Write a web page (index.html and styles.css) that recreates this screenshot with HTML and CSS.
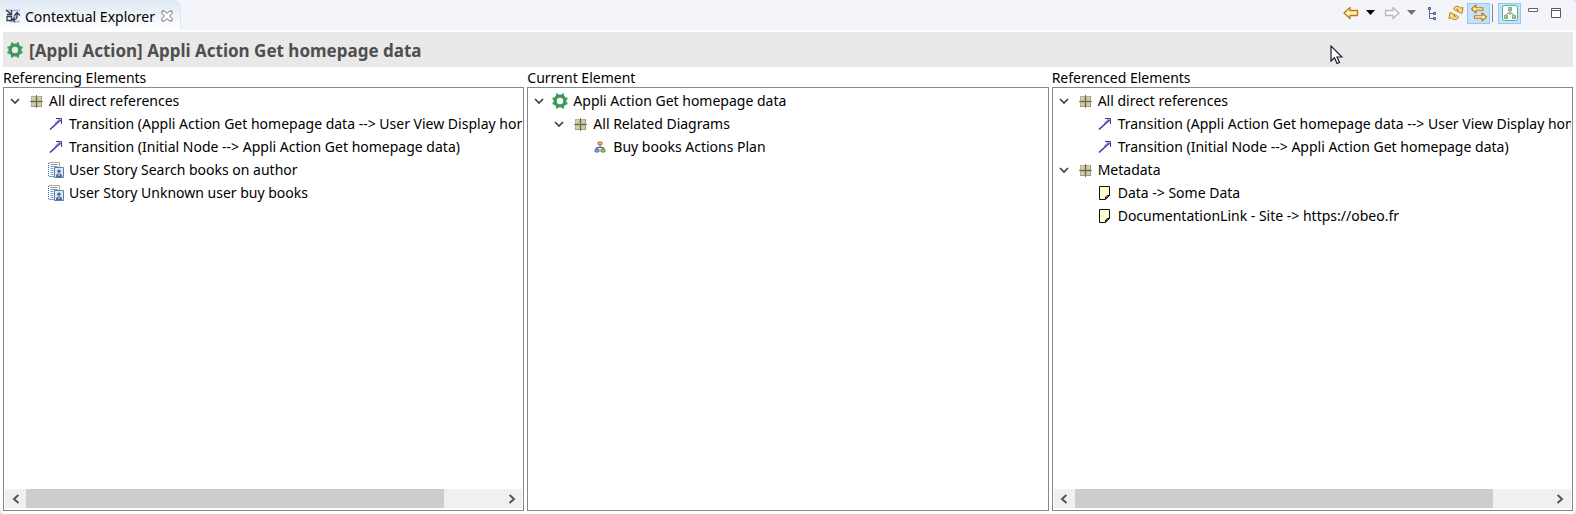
FILE: index.html
```html
<!DOCTYPE html>
<html lang="en">
<head>
<meta charset="utf-8">
<title>Contextual Explorer</title>
<link rel="stylesheet" href="styles.css">
</head>
<body>
<svg class="defs" aria-hidden="true">
  <symbol id="chevron" viewBox="0 0 10 6"><path d="M1 1l4 4 4-4" fill="none" stroke="#404040" stroke-width="1.7"/></symbol>
  <symbol id="gear" viewBox="0 0 16 16">
    <circle cx="8" cy="8" r="4.900" fill="none" stroke="#3c9a58" stroke-width="3.400"/>
    <path d="M4 .5h2l1 2.500H4zM10 .5h2V3H9zM4 15.500h2L7 13H4zM10 15.500h2V13H9zM.5 4.500v2L3 7V4.500zM.5 9.500v2H3V9zM15.500 4.500v2L13 7V4.500zM15.500 9.500v2H13V9z" fill="#3c9a58"/>
  </symbol>
  <symbol id="package" viewBox="0 0 16 16">
    <path d="M3 3h11v11H3z" fill="#b5b394"/>
    <path d="M4 4h3v3H4zM10 4h3v3h-3zM4 10h3v3H4zM10 10h3v3h-3z" fill="#d0ceb2"/>
    <path d="M8.500 2v13M2 8.500h13" stroke="#6d6a45"/>
    <path d="M3 13.500h11M13.500 3v11" stroke="#8f8c6c" stroke-opacity=".6"/>
  </symbol>
  <symbol id="arrow" viewBox="0 0 16 16">
    <path d="M8 2.500h5.500V8" fill="none" stroke="#3a3a9e"/>
    <path d="M9.500 3.500h3v3z" fill="#8d8de0"/>
    <path d="M2 13.500L12.500 4" stroke="#3030a0" stroke-width="1.400"/>
    <path d="M7 7.500L11.500 3.500" stroke="#8d8de0" stroke-width="1.300"/>
  </symbol>
  <symbol id="story" viewBox="0 0 16 16">
    <path d="M1 .5h10.500V5" fill="none" stroke="#c0a860"/>
    <path d="M.5 1v13" stroke="#3d6497" stroke-dasharray="1 1"/>
    <path d="M2.500 2.500h7M2.500 4.500h7M2.500 6.500h3M2.500 8.500h3M2.500 10.500h3M2.500 12.500h3M1 14.500h5" stroke="#6f9bce"/>
    <path d="M6.500 5.500h9v10h-9z" fill="#dbe8f8" stroke="#667f9f"/>
    <path d="M8 15c0-3 1.500-3.500 3-3.500s3 .5 3 3.500z" fill="#3d6497"/><circle cx="11" cy="9.200" r="1.600" fill="#3d6497"/><path d="M10 12.500l1 2 1-2" fill="#fff"/>
  </symbol>
  <symbol id="plan" viewBox="0 0 16 16">
    <path d="M8 6v3M4.500 11V8.500h7V11" fill="none" stroke="#50607a"/>
    <rect x="6" y="3" width="4" height="3" rx="1" fill="#f0c552" stroke="#98711d"/>
    <rect x="3" y="10" width="4" height="3" rx="1" fill="#90b4e8" stroke="#355c9c"/>
    <rect x="9" y="10" width="4" height="3" rx="1" fill="#bed85a" stroke="#44722a"/>
  </symbol>
  <symbol id="note" viewBox="0 0 16 16">
    <path d="M2.500 1.500h10v9l-4 4h-6z" fill="#ffffd2" stroke="#111"/>
    <path d="M8.500 14v-2l1.500.500v-2h2.500z" fill="#fff" stroke="#111"/>
  </symbol>
  <symbol id="left-arrow" viewBox="0 0 16 14"><path d="M1 7l6-5.500v3h7.500v5H7v3z" stroke-linejoin="round"/></symbol>
  <symbol id="down" viewBox="0 0 10 6"><path d="M0 0h9L4.500 5z"/></symbol>
  <symbol id="scroll-left" viewBox="0 0 10 10"><path d="M7.500 1L3 5l4.500 4" fill="none" stroke="#555" stroke-width="2"/></symbol>
</svg>

<main class="view">
  <header class="tabbar">
    <div class="tab">
      <svg class="icon" viewBox="0 0 16 16" aria-hidden="true">
        <path d="M1 2.500h14M5 13.500h10M8 8h4" stroke="#a9c5ef" stroke-width="2"/>
        <path d="M1 2l5 4M6.500 2v4.500H2M2 12.500V8.500h4.500v4zM8 11.500c4 .5 4.500-2 4-6M9.500 7.500l2.500-3 3 3M10 9l-2.500 2.500L10 14" fill="none" stroke="#333d4c" stroke-width="1.300"/>
      </svg>
      <span>Contextual Explorer</span>
      <button class="close" aria-label="Close">
        <svg width="12" height="12" viewBox="0 0 12 12"><path d="M1 1h2.500L6 3.500 8.500 1H11v2.500L8.500 6 11 8.500V11H8.500L6 8.500 3.500 11H1V8.500L3.500 6 1 3.500z" fill="#fff" stroke="#6b6e75"/></svg>
      </button>
    </div>
    <div class="toolbar" role="toolbar" aria-label="View actions">
      <button class="tool" aria-label="Back"><svg width="16" height="14" fill="#fff0b8" stroke="#b87c11" stroke-width="1.300"><use href="#left-arrow"/></svg></button>
      <button class="tool narrow" aria-label="Back history"><svg width="10" height="6"><use href="#down"/></svg></button>
      <button class="tool" aria-label="Forward"><svg class="flip" width="16" height="14" fill="#fafafa" stroke="#b5b8ba" stroke-width="1.300"><use href="#left-arrow"/></svg></button>
      <button class="tool narrow" aria-label="Forward history"><svg width="10" height="6" fill="#6f7276"><use href="#down"/></svg></button>
      <button class="tool" aria-label="Show tree">
        <svg width="16" height="16" viewBox="0 0 16 16"><path d="M4.500 4v9.500H8M4.500 8.500H8" fill="none" stroke="#666e84"/><path d="M3.500 2.500h2v2h-2zM8.500 7.500h2v2h-2zM8.500 12.500h2v2h-2z" fill="#8bafe4" stroke="#3c5f9d"/></svg>
      </button>
      <button class="tool" aria-label="Refresh">
        <svg width="16" height="16" viewBox="0 0 16 16" fill="#ffe184" stroke="#b87c11" stroke-linejoin="round"><path d="M5.500 4C7 .8 10.500.5 12.500 3L15 2.500 14 8.500 8.500 6l2-1C9.500 3.500 8 4 7.500 5.500zM10.500 12C9 15.200 5.500 15.500 3.500 13L1 13.500 2 7.500 7.500 10l-2 1c1 1.500 2.500 1 3-.5z"/></svg>
      </button>
      <button class="tool on" aria-label="Link with editor" aria-pressed="true">
        <svg width="18" height="18" viewBox="0 0 18 18" fill="#fff0b8" stroke="#b87c11" stroke-width="1.100" stroke-linejoin="round"><path d="M1.500 5l4.500-4v2.700h7v2.600H6V9zM16.500 13L12 9v2.700H4.500v2.600H12V17z"/></svg>
      </button>
      <span class="divider"></span>
      <button class="tool on" aria-label="Show diagrams" aria-pressed="true">
        <svg width="16" height="16" viewBox="0 0 16 16"><rect x=".5" y=".5" width="15" height="15" rx="2" fill="#fff" stroke="#62ab7c"/><path d="M8 6v4M4 10l2-2h4l2 2" fill="none" stroke="#888"/><path d="M6 2h4v4H6zM2 10h4v4H2zM10 10h4v4h-4z" fill="#76b98a"/><path d="M7 3h1v1H7zM3 11h1v1H3zM11 11h1v1h-1z" fill="#d3ecd9"/></svg>
      </button>
      <button class="tool" aria-label="Minimize"><svg width="10" height="12" viewBox="0 0 10 12"><path d="M.5 1.500h9v3h-9z" fill="#fff" stroke="#646568"/></svg></button>
      <button class="tool" aria-label="Maximize"><svg width="10" height="10" viewBox="0 0 10 10"><path d="M.5.5h9v9h-9zM0 2.500h10" fill="#fff" stroke="#5a5b5e"/></svg></button>
    </div>
  </header>

  <h1 class="title"><svg class="icon" aria-hidden="true"><use href="#gear"/></svg><span>[Appli Action] Appli Action Get homepage data</span></h1>

  <div class="columns">
    <section class="column">
      <h2 class="label">Referencing Elements</h2>
      <div class="panel">
        <ul class="tree">
          <li><div class="row"><svg class="twisty"><use href="#chevron"/></svg><svg class="icon"><use href="#package"/></svg><span>All direct references</span></div>
            <ul>
              <li class="row"><svg class="icon"><use href="#arrow"/></svg><span>Transition (Appli Action Get homepage data --&gt; User View Display homepage)</span></li>
              <li class="row"><svg class="icon"><use href="#arrow"/></svg><span>Transition (Initial Node --&gt; Appli Action Get homepage data)</span></li>
              <li class="row"><svg class="icon"><use href="#story"/></svg><span>User Story Search books on author</span></li>
              <li class="row"><svg class="icon"><use href="#story"/></svg><span>User Story Unknown user buy books</span></li>
            </ul>
          </li>
        </ul>
        <div class="scrollbar">
          <button class="step" aria-label="Scroll left"><svg width="10" height="10"><use href="#scroll-left"/></svg></button>
          <div class="track"><div class="thumb"></div></div>
          <button class="step" aria-label="Scroll right"><svg class="flip" width="10" height="10"><use href="#scroll-left"/></svg></button>
        </div>
      </div>
    </section>

    <section class="column">
      <h2 class="label">Current Element</h2>
      <div class="panel">
        <ul class="tree">
          <li><div class="row"><svg class="twisty"><use href="#chevron"/></svg><svg class="icon"><use href="#gear"/></svg><span>Appli Action Get homepage data</span></div>
            <ul class="nested">
              <li><div class="row"><svg class="twisty"><use href="#chevron"/></svg><svg class="icon"><use href="#package"/></svg><span>All Related Diagrams</span></div>
                <ul>
                  <li class="row"><svg class="icon"><use href="#plan"/></svg><span>Buy books Actions Plan</span></li>
                </ul>
              </li>
            </ul>
          </li>
        </ul>
      </div>
    </section>

    <section class="column">
      <h2 class="label">Referenced Elements</h2>
      <div class="panel">
        <ul class="tree">
          <li><div class="row"><svg class="twisty"><use href="#chevron"/></svg><svg class="icon"><use href="#package"/></svg><span>All direct references</span></div>
            <ul>
              <li class="row"><svg class="icon"><use href="#arrow"/></svg><span>Transition (Appli Action Get homepage data --&gt; User View Display homepage)</span></li>
              <li class="row"><svg class="icon"><use href="#arrow"/></svg><span>Transition (Initial Node --&gt; Appli Action Get homepage data)</span></li>
            </ul>
          </li>
          <li><div class="row"><svg class="twisty"><use href="#chevron"/></svg><svg class="icon"><use href="#package"/></svg><span>Metadata</span></div>
            <ul>
              <li class="row"><svg class="icon"><use href="#note"/></svg><span>Data -&gt; Some Data</span></li>
              <li class="row"><svg class="icon"><use href="#note"/></svg><span>DocumentationLink - Site -&gt; https://obeo.fr</span></li>
            </ul>
          </li>
        </ul>
        <div class="scrollbar">
          <button class="step" aria-label="Scroll left"><svg width="10" height="10"><use href="#scroll-left"/></svg></button>
          <div class="track"><div class="thumb"></div></div>
          <button class="step" aria-label="Scroll right"><svg class="flip" width="10" height="10"><use href="#scroll-left"/></svg></button>
        </div>
      </div>
    </section>
  </div>
  <svg class="pointer" width="13" height="20" viewBox="0 0 13 20" aria-hidden="true"><path d="M1 1v15l3.500-3.300L7 18.500l2.500-1L7 12h5z" fill="#fff" stroke="#1d1d28" stroke-width="1.200"/></svg>
</main>
</body>
</html>
```
FILE: styles.css
```css
* {
  box-sizing: border-box;
}

body {
  margin: 0;
  font: 14px/23px "Noto Sans", "Open Sans", sans-serif;
  color: #000;
  background: #e1e6f6;
}

.defs {
  display: none;
}

.view {
  position: relative;
  display: flex;
  flex-direction: column;
  min-height: 100vh;
  background: #fff;
  border-radius: 6px;
}

ul {
  margin: 0;
  padding: 0;
  list-style: none;
}

button {
  display: flex;
  align-items: center;
  justify-content: center;
  padding: 0;
  border: 0;
  background: none;
}

.flip {
  transform: scaleX(-1);
}

.icon {
  flex: none;
  width: 16px;
  height: 16px;
}

.tabbar {
  display: flex;
  justify-content: space-between;
  height: 30px;
  margin-bottom: 2px;
  background: #f3f5fb;
  border-radius: 6px 6px 0 0;
}

.tab {
  display: flex;
  align-items: center;
  gap: 4px;
  padding: 2px 5px 0;
  background: linear-gradient(#dfe8f4, #fff);
  border-right: 1px solid #dde5f0;
  border-radius: 6px 8px 0 0;
}

.close {
  width: 16px;
  height: 16px;
}

.toolbar {
  display: flex;
  align-items: center;
  padding: 0 9px 4px 0;
}

.tool {
  width: 23px;
  height: 21px;
}

.tool.narrow {
  width: 18px;
}

.tool.on {
  background: #c5e1fb;
  border: 1px solid #90c8f6;
}

.divider {
  width: 1px;
  height: 18px;
  margin: 0 5px 0 2px;
  background: #85878c;
}

.title {
  display: flex;
  align-items: center;
  gap: 6px;
  height: 35px;
  margin: 0 3px;
  padding: 0 4px;
  font-size: 17px;
  font-weight: 700;
  color: #4f4f4f;
  background: #e9e9e9;
}

.title span {
  padding-top: 2px;
}

.columns {
  flex: 1;
  display: grid;
  grid-template-columns: repeat(3, minmax(0, 1fr));
  gap: 3px;
  padding: 0 3px 3px;
}

.column {
  display: flex;
  flex-direction: column;
}

.label {
  margin: 0;
  padding-top: 1px;
  font-size: 14px;
  font-weight: 400;
  line-height: 19px;
}

.panel {
  flex: 1;
  display: flex;
  flex-direction: column;
  justify-content: space-between;
  padding: 1px 1px 2px;
  border: 1px solid #828790;
}

.tree {
  overflow: hidden;
}

.row {
  display: flex;
  align-items: center;
  gap: 5px;
  height: 23px;
  white-space: nowrap;
}

.tree ul {
  padding-left: 43px;
}

.tree .nested {
  padding-left: 20px;
}

.twisty {
  flex: none;
  width: 10px;
  height: 6px;
  margin: 0 3px 0 5px;
}

.scrollbar {
  display: flex;
  height: 19px;
  background: #f0f0f0;
}

.step {
  flex: none;
  width: 21px;
}

.track {
  flex: 1;
}

.thumb {
  width: 88%;
  height: 100%;
  background: #cdcdcd;
}

.pointer {
  position: absolute;
  top: 45px;
  right: 233px;
}
```
